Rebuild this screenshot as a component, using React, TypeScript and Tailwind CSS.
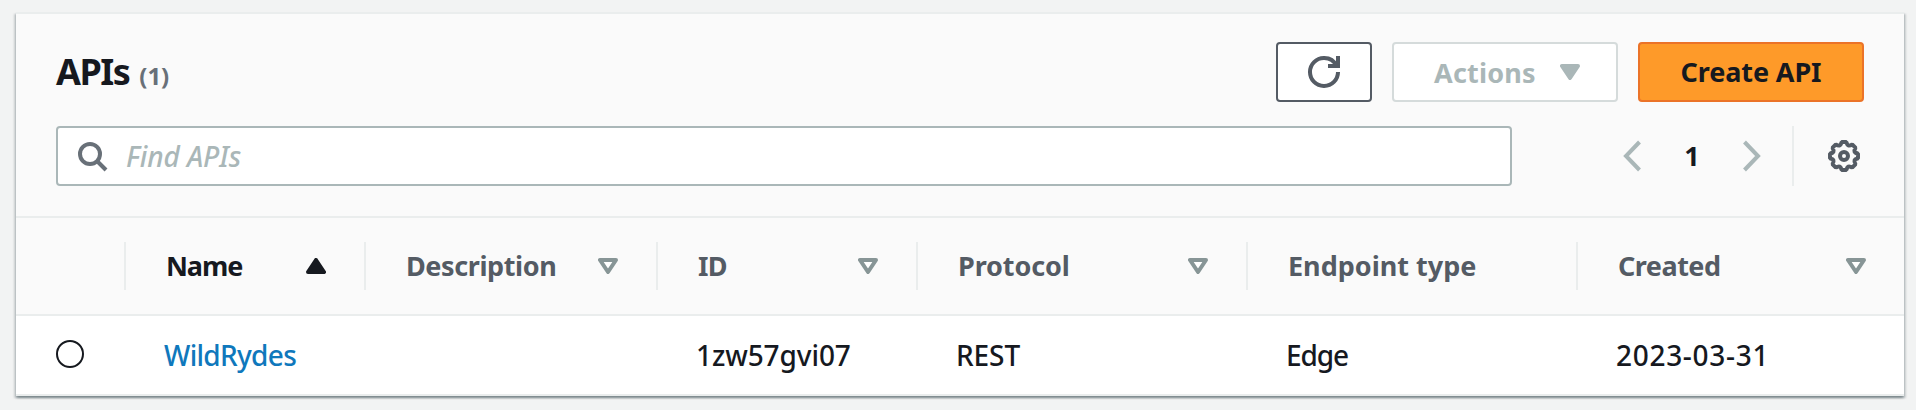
import React from 'react';

const point = (radius: number, degrees: number) => {
  const a = (degrees * Math.PI) / 180;
  return `${(16 + radius * Math.cos(a)).toFixed(2)} ${(16 + radius * Math.sin(a)).toFixed(2)}`;
};

// Eight teeth joined by shallow scallops.
const gearPath =
  'M' +
  Array.from({ length: 8 }, (_, i) => {
    const c = i * 45;
    return `${i ? 'L' : ''}${point(14.2, c - 10)} L${point(14.2, c + 10)} Q${point(9, c + 22.5)} ${point(14.2, c + 35)}`;
  }).join(' ') +
  'Z';

function GearIcon() {
  return (
    <svg className="size-8 text-[#545b64]" viewBox="0 0 32 32" fill="none" stroke="currentColor" strokeLinejoin="bevel">
      <path d={gearPath} strokeWidth="4" />
      <circle cx="16" cy="16" r="4" strokeWidth="4" />
    </svg>
  );
}

function RefreshIcon() {
  return (
    <svg className="size-8" viewBox="0 0 16 16" fill="none" stroke="currentColor" strokeWidth="2">
      <path d="M10 5h5V0" />
      <path d="M15 8a6.957 6.957 0 0 1-7 7 6.957 6.957 0 0 1-7-7 6.957 6.957 0 0 1 7-7 6.87 6.87 0 0 1 6.3 4" />
    </svg>
  );
}

function SearchIcon() {
  return (
    <svg className="size-8 shrink-0 text-[#687078]" viewBox="0 0 32 32" fill="none" stroke="currentColor" strokeWidth="4">
      <circle cx="14" cy="14" r="10" />
      <path d="M21 21l9 9" />
    </svg>
  );
}

function Chevron({ flip = false }: { flip?: boolean }) {
  return (
    <svg className={`h-8 w-5 text-[#aab7b8] ${flip ? '-scale-x-100' : ''}`} viewBox="0 0 20 32" fill="none" stroke="currentColor" strokeWidth="4">
      <path d="M17.5 2L4 16l13.5 14" />
    </svg>
  );
}

function Triangle({ up = false, hollow = false }: { up?: boolean; hollow?: boolean }) {
  return (
    <svg className={`h-4 w-5 shrink-0 ${up ? 'rotate-180' : ''}`} viewBox="0 0 20 16" stroke="currentColor" strokeWidth="4" strokeLinejoin="round">
      <path d="M2 2h16l-8 12z" fill={hollow ? '#fff' : 'currentColor'} />
    </svg>
  );
}

const columns = [
  { label: 'Name', value: 'WildRydes', sort: 'asc', head: 'tracking-[-1.1px]', cell: 'tracking-[-0.7px] text-[#0f78bc]' },
  { label: 'Description', value: '', sort: 'none', head: 'tracking-[-0.4px]', cell: '' },
  { label: 'ID', value: '1zw57gvi07', sort: 'none', head: 'tracking-[-0.8px]', cell: 'tracking-[-0.1px]' },
  { label: 'Protocol', value: 'REST', sort: 'none', head: 'tracking-[-0.1px]', cell: 'tracking-[-0.1px]' },
  { label: 'Endpoint type', value: 'Edge', sort: '', head: '', cell: 'tracking-[-1.1px]' },
  { label: 'Created', value: '2023-03-31', sort: 'none', head: 'tracking-[-0.5px]', cell: 'tracking-[0.7px]' },
];

const grid = 'grid grid-cols-[108px_240px_292px_260px_330px_330px_328px]';

export default function App() {
  return (
    <div className="h-[410px] w-[1916px] overflow-hidden bg-[#f2f3f3] px-4 pt-3 font-['Noto_Sans',sans-serif] text-[28px] font-medium text-[#16191f]">
      <main className="h-96 w-[1888px] border-t-2 border-[#eaeded] bg-white shadow-[0_2px_2px_0_rgba(0,28,36,0.3),2px_2px_2px_0_rgba(0,28,36,0.15),-2px_2px_2px_0_rgba(0,28,36,0.15)]">
        <header className="flex h-[204px] flex-col gap-6 border-b-2 border-[#eaeded] bg-[#fafafa] pt-7 pr-10 pl-10">
          <div className="flex h-[60px] items-center justify-between">
            <h1 className="flex items-baseline gap-[10px] pt-1 text-[36px] leading-[58px] font-bold tracking-[-1.5px]">
              APIs <span className="text-[24px] tracking-[-0.1px] text-[#687078]">(1)</span>
            </h1>
            <div className="flex gap-5 text-[27px] leading-[55px] font-bold">
              <button className="flex h-[60px] w-24 items-center justify-center rounded-[4px] border-2 border-[#545b64] bg-white text-[#545b64]">
                <RefreshIcon />
              </button>
              <button className="flex h-[60px] w-[226px] items-center justify-between rounded-[4px] border-2 border-[#d5dbdb] bg-white pr-9 pl-10 text-[#aab7b8]">
                <span className="tracking-[0.2px]">Actions</span>
                <Triangle />
              </button>
              <button className="flex h-[60px] w-[226px] justify-center rounded-[4px] border-2 border-[#eb7328] bg-[#fe9a29] tracking-[-0.1px]">
                Create API
              </button>
            </div>
          </div>
          <div className="flex h-[60px]">
            <label className="flex w-[1456px] items-center gap-[18px] rounded-[4px] border-2 border-[#aab7b8] bg-white pl-[18px] tracking-[-0.1px] text-[#aab7b8] italic">
              <SearchIcon />
              Find APIs
            </label>
            <nav className="ml-auto flex items-center">
              <Chevron />
              <span className="w-[100px] text-center text-[27px] font-bold">1</span>
              <Chevron flip />
              <div className="ml-[30px] flex h-full items-center border-l-2 border-[#eaeded] pr-1 pl-[34px]">
                <GearIcon />
              </div>
            </nav>
          </div>
        </header>
        <div className={`${grid} h-[98px] items-center border-b-2 border-[#eaeded] bg-[#fafafa] text-[27px] leading-[48px] font-bold`}>
          <span />
          {columns.map((c) => (
            <div
              key={c.label}
              className={`flex h-12 items-center justify-between border-l-2 border-[#eaeded] pr-[38px] pl-10 whitespace-nowrap ${c.sort === 'asc' ? 'text-[#16191f]' : 'text-[#545b64]'}`}
            >
              <span className={c.head}>{c.label}</span>
              {c.sort === 'asc' && <Triangle up />}
              {c.sort === 'none' && (
                <span className="text-[#879596]">
                  <Triangle hollow />
                </span>
              )}
            </div>
          ))}
        </div>
        <div className={`${grid} h-20 items-center border-b-2 border-[#eaeded]`}>
          <span className="mb-0.5 ml-10 size-7 rounded-full border-2 border-[#16191f] bg-white" />
          {columns.map((c) => (
            <span key={c.label} className={`pl-10 leading-[78px] ${c.cell}`}>
              {c.value}
            </span>
          ))}
        </div>
      </main>
    </div>
  );
}
